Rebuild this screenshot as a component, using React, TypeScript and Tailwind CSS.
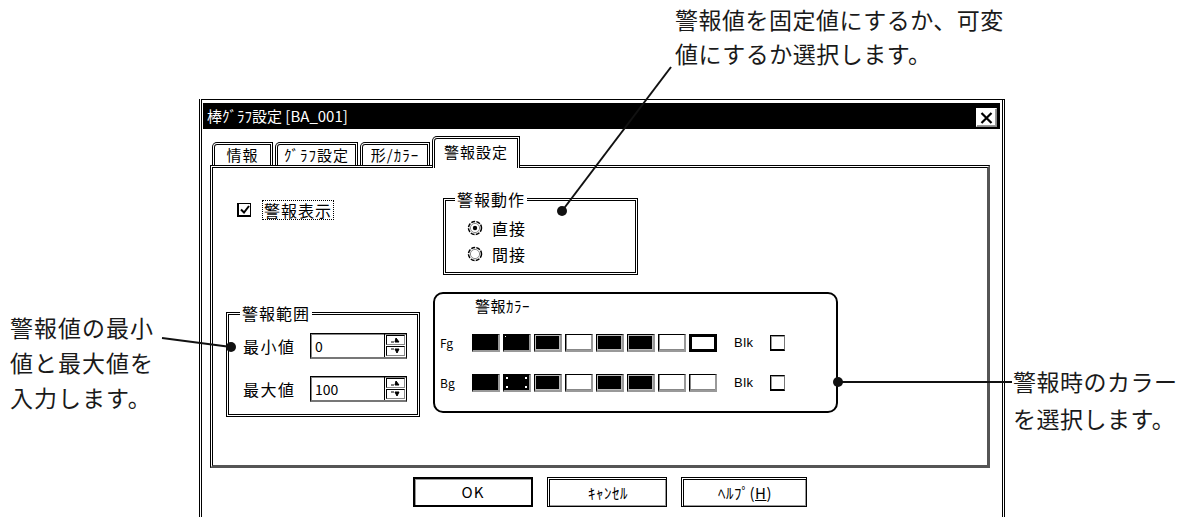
import React from 'react';

type Swatch = {
  fill: 'black' | 'white';
  bevel?: boolean;
  selected?: boolean;
  focus?: boolean;
  dot?: boolean;
};

const fgSwatches: Swatch[] = [
  { fill: 'black' },
  { fill: 'black', dot: true },
  { fill: 'black', bevel: true },
  { fill: 'white' },
  { fill: 'black', bevel: true },
  { fill: 'black', bevel: true },
  { fill: 'white' },
  { fill: 'white', selected: true },
];

const bgSwatches: Swatch[] = [
  { fill: 'black' },
  { fill: 'black', focus: true },
  { fill: 'black', bevel: true },
  { fill: 'white' },
  { fill: 'black', bevel: true },
  { fill: 'black', bevel: true },
  { fill: 'white' },
  { fill: 'white' },
];

function Tab({ label, width, active }: { label: string; width: string; active?: boolean }) {
  return (
    <div
      className={`${width} ${
        active ? 'relative z-10 -mb-[3px] h-[32px] bg-white pb-[4px]' : 'h-[23px]'
      } flex items-center justify-center rounded-tl-[5px] border-x-[3px] border-t-[3px] border-double border-black text-[15px] leading-[18px] tracking-[1px]`}
    >
      {label}
    </div>
  );
}

function Radio({ checked }: { checked?: boolean }) {
  return (
    <svg width="16" height="16" viewBox="0 0 16 16">
      <circle cx="8" cy="8" r="6.5" fill="white" stroke="black" strokeWidth="1.5" strokeDasharray="4 1.2" />
      <circle cx="8" cy="8" r="4.6" fill="none" stroke="#888" strokeWidth="1" />
      {checked && <circle cx="8" cy="8" r="2.2" fill="black" />}
    </svg>
  );
}

function Spinner() {
  return (
    <div className="flex h-full w-[22px] flex-col gap-[1px] border-l border-black p-[1px]">
      <div className="flex flex-1 items-center justify-center border border-black border-b-[#888] border-r-[#888]">
        <svg width="12" height="6" viewBox="0 0 12 6">
          <path d="M1 5 H4 M6 1 L9 5 H5 Z" stroke="black" strokeWidth="1" fill="black" />
        </svg>
      </div>
      <div className="flex flex-1 items-center justify-center border border-black border-b-[#888] border-r-[#888]">
        <svg width="12" height="6" viewBox="0 0 12 6">
          <path d="M1 1 H4 M5 1 H9 L7 5 Z" stroke="black" strokeWidth="1" fill="black" />
        </svg>
      </div>
    </div>
  );
}

function NumberField({ value }: { value: string }) {
  return (
    <div className="flex h-[26px] w-[97px] items-stretch border border-black border-b-2 border-b-[#777] bg-white shadow-[inset_1px_1px_0_#888]">
      <span className="flex-1 pl-[4px] text-[14px] leading-[24px]">{value}</span>
      <Spinner />
    </div>
  );
}

function ColorSwatch({ s }: { s: Swatch }) {
  if (s.selected) {
    return <div className="h-[18px] w-[28px] border-[3px] border-black bg-white" />;
  }
  const inner =
    s.fill === 'black'
      ? s.bevel
        ? 'bg-black shadow-[inset_1px_1px_0_#bbb,inset_-1px_-1px_0_#bbb]'
        : 'bg-black'
      : 'bg-white border-l border-b border-[#888]';
  return (
    <div className="h-[18px] w-[28px] border border-black border-b-2 border-r-2 border-b-[#999] border-r-[#999] bg-white">
      <div className={`relative h-full w-full ${inner}`}>
        {s.dot && <span className="absolute left-[1px] top-[1px] h-[1px] w-[1px] bg-white" />}
        {s.focus && (
          <>
            <span className="absolute left-[2px] top-[2px] h-[2px] w-[2px] bg-white" />
            <span className="absolute right-[2px] top-[2px] h-[2px] w-[2px] bg-white" />
            <span className="absolute bottom-[2px] left-[2px] h-[2px] w-[2px] bg-white" />
            <span className="absolute bottom-[2px] right-[2px] h-[2px] w-[2px] bg-white" />
          </>
        )}
      </div>
    </div>
  );
}

function BlkBox() {
  return <div className="h-[16px] w-[15px] border border-black border-b-2 border-r-[#777] bg-white shadow-[inset_1px_1px_0_#999]" />;
}

function ColorRow({ label, swatches }: { label: string; swatches: Swatch[] }) {
  return (
    <div className="flex h-[18px] items-center">
      <span className="w-[37px] pl-[5px] text-[12px] leading-[18px]">{label}</span>
      <div className="flex gap-[3px]">
        {swatches.map((s, i) => (
          <ColorSwatch key={i} s={s} />
        ))}
      </div>
      <span className="ml-[17px] w-[36px] font-['Liberation_Sans',sans-serif] text-[13px] leading-[18px] tracking-[0.5px]">Blk</span>
      <BlkBox />
    </div>
  );
}

function BarGraphDialog() {
  return (
    <div className="ml-[199px] mt-[99px] h-[430px] w-[806px] border-x-[3px] border-t border-double border-black pl-[1px] pr-[2px] pt-[3px]">
      {/* title bar */}
      <div className="flex h-[26px] items-start justify-between bg-black">
        <span className="ml-[4px] mt-[3px] text-[15px] leading-[20px] text-white">棒ｸﾞﾗﾌ設定 [BA_001]</span>
        <div className="mr-[3px] mt-[5px] flex h-[19px] w-[21px] items-center justify-center border border-[#888] border-t-white border-l-white bg-white shadow-[inset_-1px_-1px_0_#999]">
          <svg width="13" height="12" viewBox="0 0 13 12">
            <path d="M1.5 1 L11.5 11 M11.5 1 L1.5 11" stroke="black" strokeWidth="2.2" />
          </svg>
        </div>
      </div>

      {/* tabs + panel */}
      <div className="ml-[7px] mr-[10px] mt-[8px]">
        <div className="flex h-[28px] items-end gap-[2px] pl-[2px]">
          <Tab label="情報" width="w-[61px]" />
          <Tab label="ｸﾞﾗﾌ設定" width="w-[83px]" />
          <Tab label="形/ｶﾗｰ" width="w-[70px]" />
          <Tab label="警報設定" width="w-[88px]" active />
        </div>
        <div className="h-[303px] border-[3px] border-double border-black border-b-[#555] border-r-[#555] [border-bottom-style:solid] [border-right-style:solid]">
          {/* row 1 */}
          <div className="mt-[22px] flex items-start">
            <div className="ml-[24px] mt-[10px] flex w-[206px] items-center gap-[11px]">
              <div className="flex h-[14px] w-[14px] items-center justify-center border border-black border-b-2 border-l-2 bg-white">
                <svg width="10" height="9" viewBox="0 0 10 9">
                  <path d="M1 4.5 L4 7.5 L9 1" stroke="black" strokeWidth="2" fill="none" />
                </svg>
              </div>
              <span className="border border-dotted border-black px-[1px] text-[16px] leading-[18px] tracking-[1px]">警報表示</span>
            </div>
            <fieldset className="h-[85px] w-[195px] border-[3px] border-double border-black">
              <legend className="ml-[9px] px-[2px] text-[16px] leading-[18px] tracking-[1px]">警報動作</legend>
              <div className="ml-[21px] mt-[10px] flex flex-col gap-[6px]">
                <div className="flex h-[20px] items-center gap-[9px]">
                  <Radio checked />
                  <span className="text-[16px] leading-[20px] tracking-[1px]">直接</span>
                </div>
                <div className="flex h-[20px] items-center gap-[9px]">
                  <Radio />
                  <span className="text-[16px] leading-[20px] tracking-[1px]">間接</span>
                </div>
              </div>
            </fieldset>
          </div>

          {/* row 2 */}
          <div className="mt-[17px] flex items-start">
            <fieldset className="ml-[13px] mt-[12px] h-[113px] w-[194px] border-[3px] border-double border-black">
              <legend className="ml-[11px] px-[2px] text-[16px] leading-[18px] tracking-[1px]">警報範囲</legend>
              <div className="ml-[14px] mt-[11px] flex flex-col gap-[17px]">
                <div className="flex h-[26px] items-center">
                  <span className="w-[67px] text-[16px] tracking-[1.5px]">最小値</span>
                  <NumberField value="0" />
                </div>
                <div className="flex h-[26px] items-center">
                  <span className="w-[67px] text-[16px] tracking-[1.5px]">最大値</span>
                  <NumberField value="100" />
                </div>
              </div>
            </fieldset>

            <div className="ml-[13px] h-[121px] w-[405px] rounded-[10px] border-2 border-black pt-[2px]">
              <div className="pl-[40px] text-[15px] leading-[20px] tracking-[0.5px]">警報ｶﾗｰ</div>
              <div className="mt-[18px]">
                <ColorRow label="Fg" swatches={fgSwatches} />
              </div>
              <div className="mt-[22px]">
                <ColorRow label="Bg" swatches={bgSwatches} />
              </div>
            </div>
          </div>
        </div>
      </div>

      {/* buttons */}
      <div className="ml-[210px] mt-[9px] flex gap-[14px]">
        <button className="flex h-[30px] w-[120px] items-center justify-center border-2 border-black bg-white text-[15px] tracking-[1px] shadow-[inset_1px_1px_0_#999]">
          OK
        </button>
        <button className="flex h-[30px] w-[120px] items-center justify-center border-[3px] border-r border-b border-double border-black bg-white text-[15px] tracking-[0.5px] shadow-[inset_-1px_-1px_0_#999]">
          ｷｬﾝｾﾙ
        </button>
        <button className="flex h-[30px] w-[126px] items-center justify-center border-[3px] border-r border-b border-double border-black bg-white text-[15px] tracking-[0.5px] shadow-[inset_-1px_-1px_0_#999]">
          ﾍﾙﾌﾟ(<span className="underline">H</span>)
        </button>
      </div>
    </div>
  );
}

function Callouts() {
  return (
    <>
      <svg className="pointer-events-none absolute left-0 top-0" width="1185" height="517" viewBox="0 0 1185 517">
        <g stroke="#111" strokeWidth="2" fill="#111">
          <line x1="671" y1="67" x2="562" y2="211" />
          <circle cx="562" cy="211" r="5" stroke="none" />
          <line x1="162" y1="338" x2="231" y2="347" />
          <circle cx="231" cy="347" r="5" stroke="none" />
          <line x1="838" y1="382" x2="1012" y2="382" />
          <circle cx="838" cy="382" r="5" stroke="none" />
        </g>
      </svg>
      <p className="absolute left-[675px] top-[2px] text-[23px] leading-[34px] tracking-[0.5px] text-[#1a1a1a]">
        警報値を固定値にするか、可変
        <br />
        値にするか選択します。
      </p>
      <p className="absolute left-[10px] top-[310px] text-[23px] leading-[35px] tracking-[1px] text-[#1a1a1a]">
        警報値の最小
        <br />
        値と最大値を
        <br />
        入力します。
      </p>
      <p className="absolute left-[1013px] top-[363px] text-[23px] leading-[37px] tracking-[0.5px] text-[#1a1a1a]">
        警報時のカラー
        <br />
        を選択します。
      </p>
    </>
  );
}

export default function App() {
  return (
    <div className="relative h-[517px] w-[1185px] overflow-hidden bg-white text-black font-['Noto_Sans_CJK_JP','Noto_Sans_CJK_SC',sans-serif]">
      <BarGraphDialog />
      <Callouts />
    </div>
  );
}
